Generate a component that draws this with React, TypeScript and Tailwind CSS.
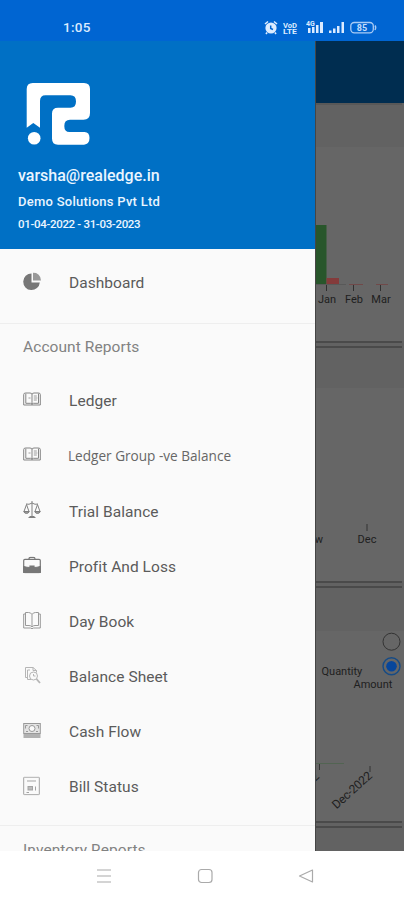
import type { ReactNode } from "react";

type MenuItem = {
  label: string;
  icon: ReactNode;
  className?: string;
};

const LedgerIcon = () => (
  <svg width="18" height="16" viewBox="0 0 18 16" fill="none" stroke="#858585" strokeWidth="1">
    <path d="M2.500 1.500H7Q9 1.500 9 3Q9 1.500 11 1.500H15.500Q17.300 1.500 17.300 3V13.500H.7V3Q.7 1.500 2.500 1.500Z" />
    <path d="M2.800 2V11.800H7.500Q9 11.800 9 13V3M9 13Q9 11.800 10.500 11.800H15.500V2" />
    <path d="M10.800 4.500h3M10.800 6.500h3.500M10.800 8.500h3M5.500 6.500h2" strokeWidth=".8" />
  </svg>
);

const menuItems: MenuItem[] = [
  { label: "Ledger", icon: <LedgerIcon /> },
  {
    label: "Ledger Group -ve Balance",
    icon: <LedgerIcon />,
    className: "-ml-px pb-[3px] font-['Open_Sans',sans-serif] text-[13.600px] text-[#666]",
  },
  {
    label: "Trial Balance",
    icon: (
      <svg width="18" height="18" viewBox="0 0 18 18" fill="none" stroke="#808080" strokeWidth="1">
        <path d="M9 .5V16M5.500 17h7M6.500 16h5M3 3.500Q6 4.500 9 2.500Q12 4.500 15 3.500M3.500 4L1 11M3.500 4L6 11M14.500 4L12 11M14.500 4L17 11" />
        <path d="M.7 11h5.600Q5.500 13 3.500 13T.7 11ZM11.700 11h5.600Q16.500 13 14.500 13T11.700 11Z" fill="#999" />
      </svg>
    ),
  },
  {
    label: "Profit And Loss",
    icon: (
      <svg width="18" height="17" viewBox="0 0 18 17" fill="none" stroke="#777" strokeWidth="1.200">
        <rect x=".7" y="2.800" width="16.600" height="13.400" rx="1.200" />
        <path d="M6 2.500Q6 .8 7.500 .8H10.500Q12 .8 12 2.500" />
        <path d="M.7 10Q4 11 7 11V9.500H11V11Q14 11 17.300 10V16H.7Z" fill="#777" />
      </svg>
    ),
  },
  {
    label: "Day Book",
    icon: (
      <svg width="18" height="18" viewBox="0 0 18 18" fill="none" stroke="#999" strokeWidth="1">
        <path d="M9 3Q8 1 5.500 1H2.500V14H6Q8 14 9 15.500Q10 14 12 14H15.500V1H12.500Q10 1 9 3V15" />
        <path d="M2.500 2.500H.7V16.500H7.500Q9 18 10.500 16.500H17.300V2.500H15.500" />
      </svg>
    ),
  },
  {
    label: "Balance Sheet",
    icon: (
      <svg width="18" height="18" viewBox="0 0 18 18" fill="none" stroke="#b5b5b5" strokeWidth="1">
        <path d="M4.500 11H2.500V1H10L13.500 4V6M10 1V4H13.500M4.500 13V3.500H7M4.500 13H8" />
        <circle cx="10.500" cy="9.500" r="4" />
        <path d="M10.500 7.500V9.500H12.500" />
        <path d="M13.500 12.500L17 16.500" strokeWidth="1.800" />
      </svg>
    ),
  },
  {
    label: "Cash Flow",
    icon: (
      <svg width="18" height="16" viewBox="0 0 18 16" fill="none" stroke="#999" strokeWidth="1">
        <rect x=".7" y="1" width="16.600" height="10" fill="#e3e3e3" />
        <circle cx="9" cy="6" r="3" fill="#fafafa" />
        <path d="M2.500 6V3H4.500M13.500 3H15.500V6M3 9H5M13 9H15" />
        <path d="M.5 12.500H17.500M.5 14.500H17.500" strokeWidth="1.300" />
      </svg>
    ),
  },
  {
    label: "Bill Status",
    icon: (
      <svg width="17" height="19" viewBox="0 0 17 19" fill="none" stroke="#a3a3a3" strokeWidth="1">
        <rect x=".7" y=".7" width="15.600" height="17.500" rx=".5" />
        <path d="M4 4.500H13M12.500 10V14M3.500 16H6" />
        <rect x="5" y="10" width="4.500" height="3.500" fill="#bcbcbc" />
      </svg>
    ),
  },
];

function StatusBar() {
  return (
    <div className="flex h-[41px] shrink-0 items-start bg-[#0065d2] pt-5 pl-[63px] text-[#dcebff]">
      <span className="-mt-px w-[201px] text-[13.500px] leading-4 font-medium tracking-[0.300px]">1:05</span>
      <svg width="14" height="15" viewBox="0 0 14 15">
        <circle cx="7" cy="8" r="5.600" fill="#dcebff" />
        <path d="M1 4L4 1.500M13 4L10 1.500M3 12.500L2 14M11 12.500L12 14" stroke="#dcebff" strokeWidth="1.600" />
        <path d="M6.700 5.500V8.500L9 9.500" fill="none" stroke="#0065d2" strokeWidth="1.500" />
      </svg>
      <svg className="ml-[5px]" width="15" height="15" viewBox="0 0 15 15" fill="#dcebff" fontSize="8" fontWeight="700">
        <text x="0" y="7.500" textLength="14" lengthAdjust="spacingAndGlyphs">VoD</text>
        <text x="0" y="14" textLength="14" lengthAdjust="spacingAndGlyphs">LTE</text>
      </svg>
      <svg className="ml-2" width="40" height="15" viewBox="0 0 40 15" fill="#dcebff">
        <text x="0" y="6" fontSize="7" fontWeight="700">4G</text>
        <path d="M2 8h2.500v5H2zM6 7h2.500v6H6zM10 5h2.500v8H10zM14 2H17v11h-3zM23 10.500h2.500V13H23zM27 8.500h2.500V13H27zM31 6h2.500v7H31zM35.500 2H38V13h-2.500z" />
      </svg>
      <svg className="ml-[4px]" width="27" height="15" viewBox="0 0 27 15">
        <rect x=".8" y="2.500" width="22.500" height="10.300" rx="3.500" fill="none" stroke="#a9ccf5" strokeWidth="1.300" />
        <path d="M25 5.500Q26.300 7.500 25 10" fill="none" stroke="#a9ccf5" strokeWidth="1.500" />
        <text x="12" y="10.900" fontSize="9" textAnchor="middle" fontWeight="700" fill="#c6defb">85</text>
      </svg>
    </div>
  );
}

function DrawerHeader() {
  return (
    <div className="h-[207.500px] shrink-0 bg-[#0070c5] pt-[42px] pl-[18px] text-[#eaf5ff]">
      <svg className="ml-2" width="64" height="63" viewBox="0 0 64 63" fill="#fff">
        <path d="M.7 44.700V6Q.7 0 6.700 0H58Q64 0 64 6V30Q64 36.700 57.500 36.700H44Q38.300 36.700 38.300 43T44 49H58.500Q63.500 49 63.500 55T58 61.700H32Q26 61.700 26 55.500V30.500Q26 24.700 32 24.700H44.500Q50 24.700 50 18.500T44.500 12.300H19.500Q14 12.300 14 18V44.700L7.300 40Z" />
        <circle cx="8.200" cy="55.200" r="6.300" />
      </svg>
      <p className="mt-5 text-[16px] leading-5 font-medium">varsha@realedge.in</p>
      <p className="mt-2 text-[13px] leading-4 font-medium tracking-[0.260px]">Demo Solutions Pvt Ltd</p>
      <p className="mt-[6px] text-[11.500px] leading-4 font-medium tracking-[-0.330px]">01-04-2022 - 31-03-2023</p>
    </div>
  );
}

function MenuRow({ icon, label, className = "text-[15.500px] tracking-[0.050px]" }: MenuItem) {
  return (
    <div className="flex h-[55.150px] shrink-0 items-center pl-[23px]">
      <span className="flex w-[46px] -translate-y-[2.500px] items-center">{icon}</span>
      <span className={`whitespace-nowrap ${className}`}>{label}</span>
    </div>
  );
}

function Drawer() {
  return (
    <aside className="flex w-[315px] shrink-0 flex-col overflow-hidden bg-[#fafafa] text-[#5b5b5b]">
      <DrawerHeader />
      <div className="flex h-[75px] shrink-0 flex-col border-b border-[#eee] pt-2">
        <MenuRow
          label="Dashboard"
          icon={
            <svg width="18" height="18" viewBox="0 0 18 18" fill="#777">
              <path d="M8.500 1A8.300 8.300 0 1 0 16.800 10H8.500Z" />
              <path d="M10 0A8 8 0 0 1 18 8H10Z" fill="#999" />
            </svg>
          }
        />
      </div>
      <h2 className="mt-[13px] mb-[18px] pl-[23px] text-[15.500px] leading-5 tracking-[0.080px] text-[#828282]">
        Account Reports
      </h2>
      {menuItems.map((item) => (
        <MenuRow key={item.label} {...item} />
      ))}
      <div className="mt-[9px] shrink-0 border-t border-[#eee] pt-[14px] pl-[23px] text-[15.500px] leading-5 tracking-[0.080px] text-[#828282]">
        Inventory Reports
      </div>
    </aside>
  );
}

// The dashboard sits under the drawer scrim, so its colours are already dimmed
function Dashboard() {
  return (
    <main className="flex flex-1 flex-col overflow-hidden border-l border-[#454545] bg-[#626262] text-[#202020]">
      <div className="-ml-px h-[62px] shrink-0 bg-[#002d50]" />
      <section className="mr-0.5 h-[240px] shrink-0 border-t-2 border-b-2 border-t-[#585858] border-b-[#4a4a4a] pt-[42px]">
        <svg className="bg-[#666]" width="88" height="194" viewBox="0 0 88 194" fill="#202020">
          <rect x="0" y="78" width="10.500" height="60" fill="#28562b" />
          <rect x="10.500" y="131" width="12.500" height="7" fill="#843b3b" />
          <path d="M0 137.500H30" stroke="#595959" />
          <path d="M33 137.500H47M60 137.500H72" stroke="#704949" />
          <path d="M10.500 138v6M37.500 138v6M64.500 138v6" stroke="#303030" />
          <g fontSize="11" textAnchor="middle">
            <text x="11" y="155.500">Jan</text>
            <text x="38" y="155.500">Feb</text>
            <text x="65" y="155.500">Mar</text>
          </g>
        </svg>
      </section>
      <section className="mt-[3px] mr-0.5 h-[237px] shrink-0 border-y-2 border-[#4a4a4a] pt-10">
        <svg className="bg-[#666]" width="88" height="193" viewBox="0 0 88 193" fill="#202020">
          <path d="M51 136v7" stroke="#333" />
          <g fontSize="11" textAnchor="middle">
            <text x="3" y="154.500">w</text>
            <text x="51" y="154.500">Dec</text>
          </g>
        </svg>
      </section>
      <section className="mt-[3px] mr-0.5 h-[237px] shrink-0 border-y-2 border-[#4a4a4a] pt-[43px]">
        <svg className="bg-[#666]" width="88" height="190" viewBox="0 0 88 190" fill="#202020">
          <circle cx="75.500" cy="10.700" r="8.500" fill="none" stroke="#333" />
          <circle cx="75.500" cy="35.200" r="8.500" fill="none" stroke="#164b86" strokeWidth="1.400" />
          <circle cx="75.500" cy="35.200" r="5.300" fill="#07469b" />
          <g fontSize="11">
            <text x="5.500" y="44">Quantity</text>
            <text x="37.500" y="57">Amount</text>
          </g>
          <path d="M0 132.500H28" stroke="#526452" />
          <path d="M3.500 133v6M54 135v6" stroke="#333" />
          <text fontSize="12" transform="translate(20.500 178.500) rotate(-42)" textLength="49">Dec-2022</text>
          <text fontSize="12" transform="translate(-1 151) rotate(-43)">2</text>
        </svg>
      </section>
      <div className="mt-[3px] mr-0.5 h-[2px] shrink-0 bg-[#4a4a4a]" />
    </main>
  );
}

function NavBar() {
  return (
    <nav className="flex h-[49px] shrink-0 items-center justify-between bg-white pr-[90px] pl-[96px]">
      <svg width="16" height="16" viewBox="0 0 16 16" stroke="#aaa" strokeWidth="1.200">
        <path d="M1 2H15M1 8H15M1 14H15" />
      </svg>
      <svg width="16" height="16" viewBox="0 0 16 16" fill="none" stroke="#aaa" strokeWidth="1.200">
        <rect x="1.500" y="1.500" width="13.500" height="13" rx="3" />
      </svg>
      <svg width="16" height="16" viewBox="0 0 16 16" fill="none" stroke="#aaa" strokeWidth="1.200">
        <path d="M14.500 2V14L1.500 8Z" strokeLinejoin="round" />
      </svg>
    </nav>
  );
}

export default function App() {
  return (
    <div className="flex h-[900px] w-[404px] flex-col overflow-hidden bg-white font-[Roboto,sans-serif]">
      <StatusBar />
      <div className="flex min-h-0 flex-1">
        <Drawer />
        <Dashboard />
      </div>
      <NavBar />
    </div>
  );
}
